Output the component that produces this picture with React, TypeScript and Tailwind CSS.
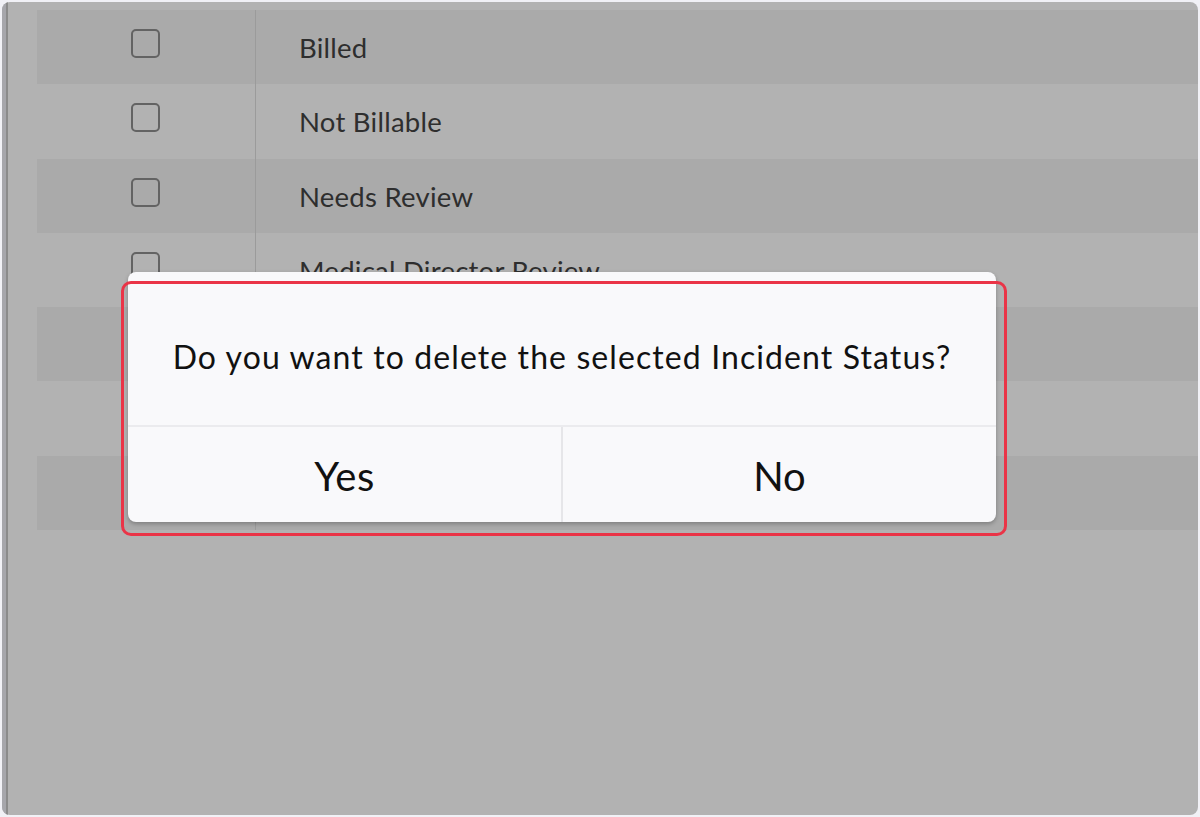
import React from "react";

const rows = [
  "Billed",
  "Not Billable",
  "Needs Review",
  "Medical Director Review",
  "",
  "",
  "",
];

export default function App() {
  return (
    <div
      className="w-[1200px] h-[817px] bg-[#f1f1f6] p-[2px] relative overflow-hidden"
      style={{ fontFamily: "Lato, 'Open Sans', sans-serif" }}
    >
      <div className="w-full h-full rounded-[8px] bg-[#b2b2b2] overflow-hidden flex">
        <div className="w-[4px] bg-[#a6a6ab]" />
        <div className="w-[2px] bg-[#8b8b8b]" />
        <div className="flex-1 pt-[8px] pl-[29px]">
          {rows.map((r, i) => (
            <div
              key={i}
              className={`flex h-[74.3px] ${i % 2 === 0 ? "bg-[#aaaaaa]" : "bg-[#b2b2b2]"}`}
            >
              <div className="w-[219px] flex justify-center pt-[19px] border-r border-[#9b9b9b]">
                {i < 4 && (
                  <div className="w-[29px] h-[29px] rounded-[5px] border-2 border-[#636363] ml-[-1px]" />
                )}
              </div>
              <div className="pl-[43px] pt-[21px] text-[27.5px] leading-[34px] tracking-[0.25px] text-[#2e2e2e]">
                {r}
              </div>
            </div>
          ))}
        </div>
      </div>

      {/* dialog */}
      <div className="absolute left-[128px] top-[272px] w-[868px] h-[250px] bg-[#f9f9fb] rounded-[8px] shadow-[0_2px_4px_rgba(0,0,0,0.25)] flex flex-col">
        <div className="h-[155px] flex items-center justify-center border-b-2 border-[#ebebee] pt-[20px] pb-[4px]">
          <span className="text-[32px] text-[#111] tracking-[1.1px] whitespace-nowrap">
            Do you want to delete the selected Incident Status?
          </span>
        </div>
        <div className="flex-1 flex">
          <div className="flex-1 flex items-center justify-center border-r-2 border-[#e6e6e9] text-[40px] text-[#111] pt-[2px] tracking-[0.5px]">
            Yes
          </div>
          <div className="flex-1 flex items-center justify-center text-[40px] text-[#111] pt-[2px]">
            No
          </div>
        </div>
      </div>

      {/* red annotation frame */}
      <div className="absolute left-[121px] top-[281px] w-[886px] h-[255px] rounded-[10px] border-[3px] border-[#ea3447]" />
    </div>
  );
}
